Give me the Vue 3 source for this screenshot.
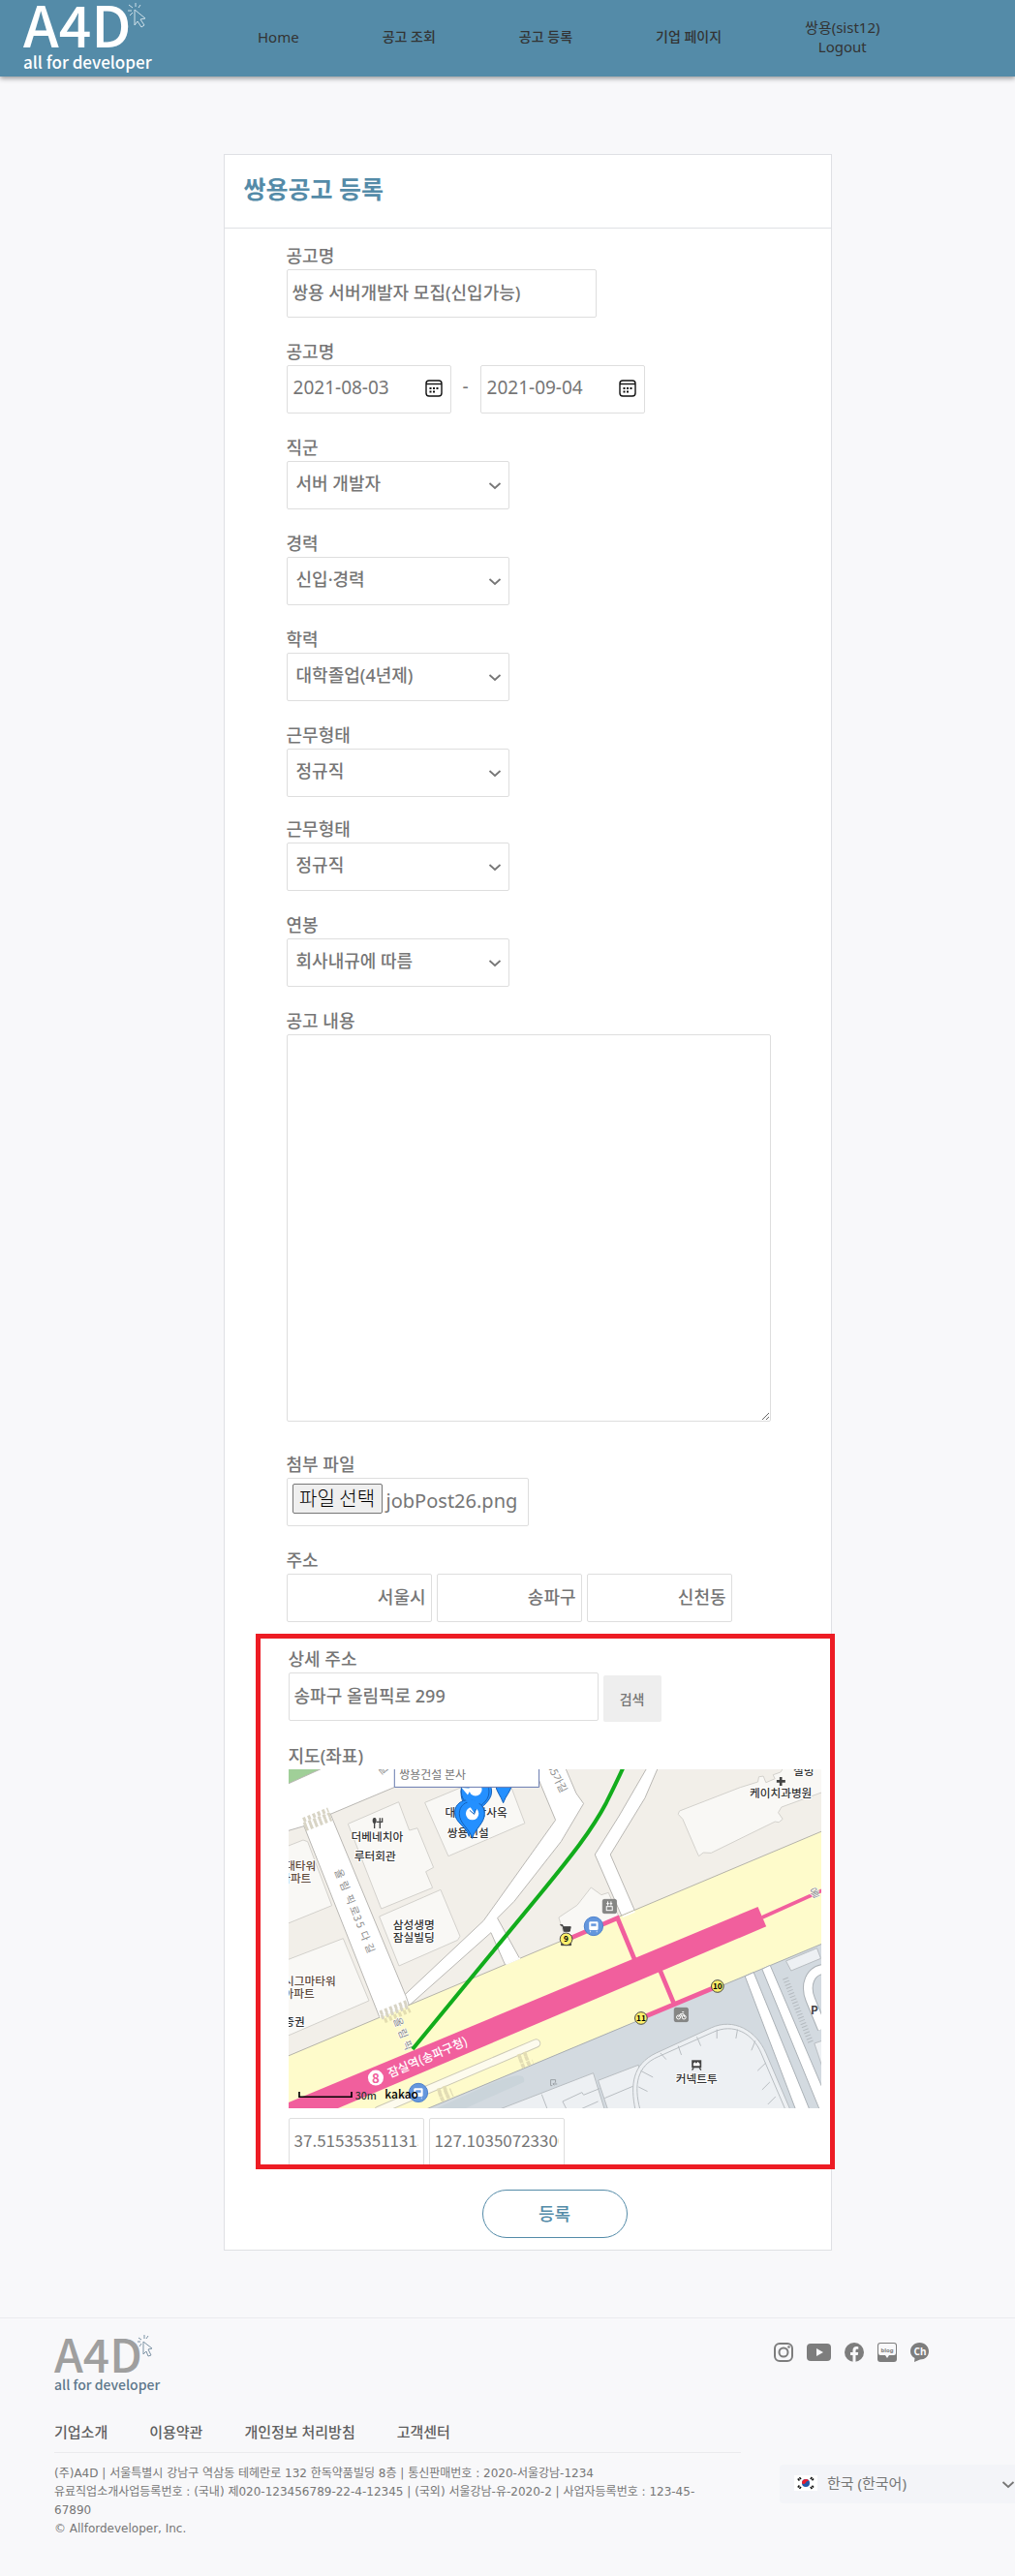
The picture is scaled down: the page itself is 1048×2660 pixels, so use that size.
<script setup>
import { ref } from 'vue'

const links = ['공고 조회', '공고 등록', '기업 페이지']
const title = ref('쌍용 서버개발자 모집(신입가능)')
const from = ref('2021-08-03')
const to = ref('2021-09-04')
const selects = [
  { id: 'job', label: '직군', value: '서버 개발자' },
  { id: 'career', label: '경력', value: '신입·경력' },
  { id: 'school', label: '학력', value: '대학졸업(4년제)' },
  { id: 'type1', label: '근무형태', value: '정규직', tight: true },
  { id: 'type2', label: '근무형태', value: '정규직' },
  { id: 'pay', label: '연봉', value: '회사내규에 따름' },
]
const content = ref('')
const region = ref(['서울시', '송파구', '신천동'])
const detail = ref('송파구 올림픽로 299')
const lat = ref('37.515353511315')
const lng = ref('127.10350723300')
const footLinks = ['기업소개', '이용약관', '개인정보 처리방침', '고객센터']
</script>

<template>
  <div class="page">
    <header class="top">
      <a href="#" class="logo">
        <svg viewBox="0 0 140 78" width="140" height="78" role="img" aria-label="A4D all for developer">
          <text x="0" y="48" class="big">A4D</text>
          <text x="0" y="70" class="small">all for developer</text>
          <g fill="none" stroke="#cfe0e9" stroke-width="1">
            <path d="M115 9l11 9-5 1 4 6-3 2-4-6-3 4z" />
            <path d="M113 7l-4-3M116 6V2M119 7l2-3M112 10h-4M113 12l-3 3" />
          </g>
        </svg>
      </a>
      <nav class="menu">
        <a href="#" class="latin">Home</a>
        <a v-for="l in links" :key="l" href="#">{{ l }}</a>
        <div class="user latin"><a href="#">쌍용(sist12)</a><a href="#">Logout</a></div>
      </nav>
    </header>

    <main class="card">
      <h1>쌍용공고 등록</h1>
      <form @submit.prevent>
        <div class="field">
          <label for="title">공고명</label>
          <input id="title" v-model="title" type="text" class="box w320" />
        </div>
        <div class="field">
          <label for="from">공고명</label>
          <div class="row dates">
            <span class="date">
              <input id="from" v-model="from" type="text" class="box" />
              <button type="button" aria-label="달력">
                <svg viewBox="0 0 18 18" width="18" height="18"><rect x="1" y="1" width="16" height="16" rx="3" fill="none" stroke="#111" stroke-width="1.4" /><path d="M1 4.500h16" stroke="#111" stroke-width="1.400" /><path d="M8 9h2M11.500 9h2M4.500 9h2M4.500 12.500h2M8 12.500h2" stroke="#111" stroke-width="2" /></svg>
              </button>
            </span>
            <span class="dash">-</span>
            <span class="date">
              <input v-model="to" type="text" class="box" aria-label="종료일" />
              <button type="button" aria-label="달력">
                <svg viewBox="0 0 18 18" width="18" height="18"><rect x="1" y="1" width="16" height="16" rx="3" fill="none" stroke="#111" stroke-width="1.4" /><path d="M1 4.500h16" stroke="#111" stroke-width="1.400" /><path d="M8 9h2M11.500 9h2M4.500 9h2M4.500 12.500h2M8 12.500h2" stroke="#111" stroke-width="2" /></svg>
              </button>
            </span>
          </div>
        </div>
        <div v-for="s in selects" :key="s.id" class="field" :class="{ tight: s.tight }">
          <label :for="s.id">{{ s.label }}</label>
          <span class="pick">
            <select :id="s.id" class="box"><option>{{ s.value }}</option></select>
            <svg viewBox="0 0 14 9" width="14" height="9"><path d="M1.500 2l5.500 5 5.500-5" fill="none" stroke="#767676" stroke-width="1.800" /></svg>
          </span>
        </div>
        <div class="field content">
          <label for="content">공고 내용</label>
          <textarea id="content" v-model="content" class="box"></textarea>
        </div>
        <div class="field">
          <label for="file">첨부 파일</label>
          <div class="box file">
            <input id="file" type="file" class="hidden" />
            <label for="file" class="filebtn">파일 선택</label>
            <span>jobPost26.png</span>
          </div>
        </div>
        <div class="field last">
          <label for="r0">주소</label>
          <div class="row">
            <input v-for="(r, i) in region" :id="'r' + i" :key="i" v-model="region[i]" type="text" class="box w150" :aria-label="i ? '주소 ' + (i + 1) : null" />
          </div>
        </div>

        <section class="marked">
          <div class="field">
            <label for="detail">상세 주소</label>
            <div class="row">
              <input id="detail" v-model="detail" type="text" class="box w320" />
              <button type="button" class="search">검색</button>
            </div>
          </div>
          <label for="lat">지도(좌표)</label>
          <svg class="map" viewBox="21 21 1653 1050" role="img" aria-label="지도">
            <rect x="21" y="21" width="1653" height="1050" fill="#f2efe9" />
            <path d="M21 21H127L21 66z" fill="#a0cf98" />
            <g fill="#f9f8f5" stroke="#d3d1cc" stroke-width="3">
              <path d="M205 190L362 122L395 210L420 203L470 325L446 338L467 388L308 453Z" />
              <path d="M302 477L492 394L552 538L545 550L363 630Z" />
              <path d="M443 124L690 21L753 188L516 290Z" />
              <path d="M15 260L66 240L80 245L155 443L15 500Z" />
              <path d="M15 612L190 545L270 738L15 848Z" />
              <path d="M1228 160L1232 150L1420 77L1475 60L1478 44L1492 42L1500 62L1528 50L1522 38L1545 30L1555 15H1680V90L1548 138L1538 155L1552 175L1540 185L1528 183L1330 280L1306 279L1292 290L1282 268L1242 175Z" />
              <path d="M858 480L915 442L958 387L990 410L1012 403L1045 480L880 550Z" />
            </g>
            <g fill="#fff" stroke="#b9b7b3" stroke-width="3">
              <path d="M10 70L127 17H490L150 160L68 197L10 214Z" />
              <path d="M780 15H878L912 95L935 127L865 245L720 430L668 482L737 607L692 627L648 527L395 752L375 725L625 490L848 178Z" />
              <path d="M1132 15H1166L1125 110L1018 285L1095 462L1055 480L970 285L1045 165Z" />
              <path d="M68 195L150 158L385 725L395 755L303 790Z" />
            </g>
            <path d="M70 191L148 158L155 175L77 210Z" fill="#fff" />
            <path d="M15 911L1680 210V1080H15Z" fill="#fefbcb" stroke="#b5b3aa" stroke-width="3" />
            <path d="M303 789L390 752M694 625L738 606M1056 478L1094 461" stroke="#fff" stroke-width="5" />
            <path d="M445 1075L1680 559V1080Z" fill="#d3dae0" stroke="#a9adb0" stroke-width="3" />
            <path d="M480 1071L660 990Q760 950 750 990L570 1071Z" fill="#cad4da" />
            <g fill="#edf0f3" stroke="#b8bdc1" stroke-width="3">
              <path d="M660 1080L965 962L1000 1075Z" />
              <path d="M980 985L1105 937L1120 1075H1010Z" />
              <path d="M1095 1075C1080 1000 1085 935 1160 900L1330 822C1400 790 1470 830 1500 900L1575 1075Z" />
              <path d="M1562 615L1658 575L1670 607L1578 645Z" />
              <path d="M1650 870L1680 860V960Z" />
            </g>
            <g fill="none" stroke="#b8bdc1" stroke-width="3">
              <path d="M1110 1075C1090 1000 1100 940 1165 912L1335 836C1400 805 1460 840 1485 900L1560 1075" />
              <path d="M805 1028L848 1140M870 1050L930 1022L935 1030L985 1010M870 1050L885 1080M890 1090L980 1050M1000 1040L1088 1003" />
              <path d="M1173 900l18 20M1228 878l10 28M1286 850l12 28M1348 827v28M1412 827l-5 28M1467 862l-12 30M1500 930l-26 25M1512 990l-24 24M1530 1035l-24 24M1112 955l38 20M1105 1005l28 14" />
            </g>
            <g fill="#fff" stroke="#abb1b6" stroke-width="3">
              <path d="M1435 662L1462 650L1635 1075H1592Z" />
              <path d="M1488 640L1513 628L1680 1020V1080H1668Z" />
            </g>
            <path d="M1680 640C1635 645 1620 690 1638 735L1675 825" fill="none" stroke="#abb1b6" stroke-width="32" />
            <path d="M1680 640C1635 645 1620 690 1638 735L1675 825" fill="none" stroke="#fff" stroke-width="26" />
            <path d="M1560 668L1640 870" stroke="#b4babf" stroke-width="18" stroke-dasharray="3 7" />
            <path d="M300 1078L788 870" stroke="#ccc9b5" stroke-width="28" stroke-linecap="round" />
            <path d="M300 1078L788 870" stroke="#fdfbee" stroke-width="22" stroke-linecap="round" />
            <g fill="none" stroke="#d8d4c5" stroke-width="14">
              <path d="M66 178L144 146M68 193L150 160M73 206L154 174" stroke-dasharray="9 7" />
              <path d="M304 776L388 742M308 790L394 754" stroke-dasharray="9 7" />
              <path d="M318 801L398 767" stroke="#e3ddb0" stroke-dasharray="9 7" />
              <path d="M731 912L762 900M736 926L770 912M742 942L778 926M482 1018L515 1005M486 1031L525 1015M492 1045L530 1028" stroke="#e2dcb4" stroke-dasharray="11 8" />
            </g>
            <g class="road">
              <text transform="translate(163 335) rotate(68)" x="0 41 86 123 154 177 208 249" y="0">올림픽로35다길</text>
              <text transform="translate(345 795) rotate(68)" x="0 38 77 117" y="0">올림픽로</text>
              <text transform="translate(822 12) rotate(63)">35가길</text>
              <text transform="translate(297 16) rotate(50)">길</text>
            </g>
            <path d="M405 888L800 408C900 286 960 210 1005 125Q1035 65 1058 15" fill="none" stroke="#12ac1c" stroke-width="12" />
            <path d="M15 1056L1475 447L1501 508L165 1075H15Z" fill="#f15f9d" />
            <path d="M1488 480L1680 394" stroke="#f15f9d" stroke-width="11" />
            <path d="M885 548L1040 482L1093 610M1172 644L1217 752M1113 792L1350 693" fill="none" stroke="#f15f9d" stroke-width="14" />
            <g class="road"><text transform="translate(1642 420) rotate(-22)" fill="#94904f">올</text></g>
            <circle cx="291" cy="977" r="24" fill="#fff" />
            <text x="291" y="992" text-anchor="middle" class="num" fill="#f15f9d">8</text>
            <text transform="translate(335 977) rotate(-23)" class="station">잠실역(송파구청)</text>
            <g class="poi" text-anchor="middle">
              <text x="295" y="242">더베네치아</text>
              <text x="289" y="302">루터회관</text>
              <text x="409" y="517">삼성생명</text>
              <text x="409" y="556">잠실빌딩</text>
              <text x="602" y="168">대한제당사옥</text>
              <text x="577" y="232">쌍용건설</text>
              <text x="1546" y="109">케이치과병원</text>
              <text x="1617" y="38">설빙</text>
              <text x="1285" y="992">커넥트투</text>
              <g text-anchor="end">
                <text x="106" y="332" class="apt">대타워</text>
                <text x="91" y="373" class="apt">아파트</text>
                <text x="167" y="689" class="apt">시그마타워</text>
                <text x="101" y="730" class="apt">아파트</text>
                <text x="71" y="815">증권</text>
              </g>
            </g>
            <text x="1650" y="780" text-anchor="middle" class="park">P</text>
            <g stroke="#444" fill="none" stroke-width="5">
              <path d="M287 172V204M304 172V184H293M304 184H311V172M304 172V204" stroke-width="4" />
              <ellipse cx="287" cy="180" rx="6" ry="9" fill="#444" stroke="none" />
              <path d="M1546 45V72M1533 58H1560" stroke-width="8" />
            </g>
            <g fill="#444"><path d="M1270 922h30v24h-30z" /><path d="M1276 946l-5 7M1294 946l5 7" stroke="#444" stroke-width="4" /><path d="M1275 940v-8l5-4 4 4 5-5 6 6v7z" fill="#fff" /></g>
            <path d="M833 983h15v9M833 983v18h5M853 996h-13l4-4M840 996l4 4" fill="none" stroke="#9aa0a4" stroke-width="3" />
            <g stroke="#1560b8" stroke-width="3" fill="#2490ff">
              <path d="M662 70h50c-3 20-18 32-26 55c-8-23-21-35-24-55z" />
              <path d="M650 90c0 35-45 50-60 90c-12-38-35-50-35-90c0-60 95-60 95 0z" />
              <path d="M642 90c0 35-33 40-46 72c-12-32-40-40-40-72c0-60 86-60 86 0z" />
              <path d="M620 155c0 32-32 42-40 74c-8-32-44-42-44-74c0-52 84-52 84 0z" />
              <path d="M628 158c0 32-30 46-38 77c-8-31-40-45-40-77c0-50 78-50 78 0z" />
            </g>
            <circle cx="600" cy="83" r="20" fill="#fff" /><path d="M557 78l30 2-11 20z" fill="#fff" />
            <circle cx="590" cy="158" r="20" fill="#fff" />
            <path d="M565 108l32 50 16-36z" fill="#2490ff" /><path d="M582 148l14 12 5-16" fill="none" stroke="#1560b8" stroke-width="3" />
            <path d="M349 10V76H797V10Z" fill="#fff" stroke="#6678ae" stroke-width="3" />
            <text x="364" y="52" class="tip">쌍용건설 본사</text>
            <g stroke="#777" stroke-width="2">
              <rect x="994" y="424" width="43" height="43" rx="5" fill="#858684" />
              <rect x="1216" y="760" width="43" height="43" rx="5" fill="#858684" />
            </g>
            <g fill="none" stroke="#fff" stroke-width="3">
              <rect x="1006" y="446" width="18" height="12" /><path d="M1010 443v-13M1006 437h8M1020 443v-13M1016 437h8" />
              <circle cx="1229" cy="789" r="6" /><circle cx="1246" cy="789" r="6" /><path d="M1229 789l6-10h10l3 10M1235 779l5 9M1240 773h6" />
            </g>
            <g><circle cx="966" cy="507" r="29" fill="#6497dd" stroke="#4d82cc" stroke-width="3" /><rect x="952" y="493" width="28" height="26" rx="4" fill="#fff" /><path d="M957 498h18v10h-18zM956 521v5M976 521v5" fill="#6497dd" stroke="#fff" stroke-width="2" /></g>
            <g><circle cx="423" cy="1023" r="29" fill="#6497dd" stroke="#4d82cc" stroke-width="3" /><rect x="409" y="1009" width="28" height="26" rx="4" fill="#fff" /><path d="M414 1014h18v10h-18zM413 1037v5M433 1037v5" fill="#6497dd" stroke="#fff" stroke-width="2" /></g>
            <path d="M862 503h8l4 20h18l3-14h-24M866 560h30v6h-30z" fill="#444" stroke="#444" stroke-width="3" />
            <g fill="#fdf06b" stroke="#444" stroke-width="3"><circle cx="881" cy="547" r="19" /><circle cx="1350" cy="693" r="19" /><circle cx="1113" cy="792" r="19" /></g>
            <g class="exit" text-anchor="middle"><text x="881" y="556">9</text><text x="1350" y="702">10</text><text x="1113" y="801">11</text></g>
            <path d="M54 1020V1036H216V1020" fill="none" stroke="#000" stroke-width="5" />
            <text x="227" y="1043" class="scale">30m</text>
            <text x="319" y="1041" class="kakao">kakao</text>
          </svg>
          <div class="row coords">
            <input id="lat" v-model="lat" type="text" class="box w140" />
            <input v-model="lng" type="text" class="box w140" aria-label="경도" />
          </div>
        </section>
        <button type="submit" class="submit">등록</button>
      </form>
    </main>

    <footer class="foot">
      <div class="info">
        <a href="#" class="flogo">
          <svg viewBox="0 0 112 60" width="112" height="60" role="img" aria-label="A4D all for developer">
            <text x="0" y="40" class="fbig">A4D</text>
            <text x="0" y="58" class="fsmall">all for developer</text>
            <path d="M92 8l9 7-4 1 3 6-3 1-2-5-3 3zM90 6l-3-2M93 5V1M95 5l2-3M89 8h-3M90 10l-2 3" fill="none" stroke="#7d93a5" stroke-width="1" />
          </svg>
        </a>
        <nav class="fnav"><a v-for="f in footLinks" :key="f" href="#">{{ f }}</a></nav>
        <p>
          (주)A4D | 서울특별시 강남구 역삼동 테헤란로 132 한독약품빌딩 8층 | 통신판매번호 : 2020-서울강남-1234<br />
          유료직업소개사업등록번호 : (국내) 제020-123456789-22-4-12345 | (국외) 서울강남-유-2020-2 | 사업자등록번호 : 123-45-<br />67890<br />
          © Allfordeveloper, Inc.
        </p>
      </div>
      <div class="side">
        <div class="social">
          <a href="#" aria-label="Instagram"><svg width="20" height="20" viewBox="0 0 20 20"><rect x="1" y="1" width="18" height="18" rx="5" fill="none" stroke="#7d7d7d" stroke-width="2" /><circle cx="10" cy="10" r="4.500" fill="none" stroke="#7d7d7d" stroke-width="2" /><circle cx="15.500" cy="4.500" r="1.300" fill="#7d7d7d" /></svg></a>
          <a href="#" aria-label="YouTube"><svg width="25" height="20" viewBox="0 0 25 20"><rect y="1" width="25" height="18" rx="4" fill="#7d7d7d" /><path d="M10 6v8l7-4z" fill="#f8f8fa" /></svg></a>
          <a href="#" aria-label="Facebook"><svg width="20" height="20" viewBox="0 0 20 20"><circle cx="10" cy="10" r="10" fill="#7d7d7d" /><path d="M8.500 20v-7H6v-3h2.500V8c0-2.700 1.500-4 3.800-4l2 .2v2.500h-1.200c-1.200 0-1.600.7-1.600 1.500V10h2.700l-.5 3h-2.200v7z" fill="#f8f8fa" /></svg></a>
          <a href="#" aria-label="Blog"><svg width="20" height="20" viewBox="0 0 20 20"><rect width="20" height="20" rx="3" fill="#7d7d7d" /><path d="M1 3q0-2 2-2h14q2 0 2 2v8q0 2-2 2h-5l-2 3-2-3H3q-2 0-2-2z" fill="#f8f8fa" /><text x="10" y="10" text-anchor="middle" class="blog">blog</text></svg></a>
          <a href="#" aria-label="Channel"><svg width="20" height="20" viewBox="0 0 20 20"><path d="M9.500 0C15 0 19 4 19 9s-4 8.500-9 8.500L4 20l.5-4C1.500 14.500 0 12 0 9c0-5 4-9 9.500-9z" fill="#7d7d7d" /><text x="10" y="13" text-anchor="middle" class="ch">Ch</text></svg></a>
        </div>
        <div class="lang">
          <svg class="flag" viewBox="0 0 24 16" width="24" height="16"><rect width="24" height="16" fill="#fff" /><circle cx="12" cy="8" r="4" fill="#2457a8" /><path d="M8 8a4 4 0 0 1 7.500-1.800c-1.500-1-2.800 0-3.500 1.300S9 10 8 8z" fill="#ec1c2d" /><path d="M4 5l3-2.500M17 2.500l3 2.500M4 11l3 2.500M17 13.500l3-2.500" stroke="#111" stroke-width="2.500" stroke-dasharray="1.600 .5" /></svg>
          <select aria-label="언어"><option>한국 (한국어)</option></select>
          <svg class="arrow" viewBox="0 0 14 9" width="14" height="9"><path d="M1.500 2l5.500 5 5.500-5" fill="none" stroke="#767676" stroke-width="1.800" /></svg>
        </div>
      </div>
    </footer>
  </div>
</template>

<style>
body { background: #f8f8fa; overflow-x: hidden; }
</style>

<style scoped>
* { box-sizing: border-box; }
.page { font-family: "Noto Sans", "Noto Sans CJK KR", sans-serif; color: #767676; overflow: hidden; background: #f8f8fa; }
a { color: inherit; text-decoration: none; }
.top { display: flex; align-items: center; height: 79px; background: #548ba8; box-shadow: 0 2px 5px rgba(0, 0, 0, .4); }
.logo { margin-left: 24px; line-height: 0; }
.logo svg { overflow: visible; }
.big { font: 500 59px "Noto Sans CJK KR", sans-serif; fill: #fff; }
.small { font: 500 17px "Noto Sans CJK KR", sans-serif; fill: #fff; }
.menu { display: flex; align-items: center; gap: 86px; margin-left: 102px; color: #333; font-size: 14px; font-weight: 500; line-height: 20px; padding-bottom: 3px; white-space: nowrap; }
.latin { font-size: 15px; font-weight: 400; }
.user { display: flex; flex-direction: column; align-items: center; }

.card { margin: 80px 18% 0 22%; background: #fff; border: 1px solid #dfe0e4; }
h1 { margin: 0; height: 76px; padding-left: 20px; line-height: 70px; font-size: 25px; font-weight: 700; color: #548ba8; border-bottom: 1px solid #dfe0e4; }
form { padding: 15px 0 12px 64px; }
label { display: block; height: 27px; line-height: 26px; font-size: 18px; font-weight: 500; }
.field { margin-bottom: 22px; }
.field.tight { margin-bottom: 20px; }
.box { display: block; height: 50px; margin: 0; padding: 0 5px; padding-bottom: 5px; border: 1px solid #dedede; border-radius: 2px; background: #fff; color: #767676; font-family: inherit; font-size: 18px; font-weight: 500; outline: 0; }
.row { display: flex; gap: 5px; }
.w320 { width: 320px; }
.w150 { width: 150px; text-align: right; }
.w140 { width: 140px; font-family: "Noto Sans CJK KR", sans-serif; font-size: 17px; font-weight: 400; }
.dates { gap: 0; align-items: center; }
.date { position: relative; width: 170px; }
.date .box { width: 100%; font-size: 19px; font-weight: 400; padding-left: 6px; }
.date button { position: absolute; right: 9px; top: 15px; padding: 0; border: 0; background: none; line-height: 0; }
.dash { width: 30px; text-align: center; font-size: 19px; line-height: 24px; padding-bottom: 6px; }
.pick { display: block; position: relative; width: 230px; }
.pick select { width: 100%; appearance: none; padding: 0 30px 5px 9px; }
.pick svg { position: absolute; right: 8px; top: 21px; pointer-events: none; }
.content { margin-bottom: 31px; }
textarea.box { width: 500px; height: 400px; resize: both; }
.file { display: flex; align-items: flex-start; width: 250px; padding: 5px; font-size: 20px; font-weight: 400; line-height: 36px; }
.hidden { position: absolute; width: 1px; height: 1px; opacity: 0; }
.filebtn { flex: none; width: 93px; height: 31px; margin-right: 4px; border: 1px solid #767676; border-radius: 2px; background: #efefef; color: #000; text-align: center; font-family: "Noto Sans CJK KR", sans-serif; font-size: 20px; font-weight: 300; line-height: 27px; }
.last { margin-bottom: 12px; }
.marked { margin: 0 -4px 21px -32px; padding: 8px 9px 0 29px; border: 5px solid #ed1c24; height: 553px; overflow: hidden; }
.search { width: 60px; height: 48px; margin-top: 3px; border: 0; border-radius: 2px; background: #eee; color: #767676; font: 500 14px "Noto Sans CJK KR", sans-serif; }
.map { display: block; width: 100%; height: 350px; margin-bottom: 10px; }
.map text { font-family: "Noto Sans CJK KR", sans-serif; }
.poi text { font-size: 35px; font-weight: 500; fill: #333; stroke: #fff; stroke-width: 6px; paint-order: stroke; stroke-linejoin: round; }
.poi .apt { fill: #5f4b3c; }
.road text { font-size: 32px; fill: #8c8c8c; stroke: #fff; stroke-width: 3px; paint-order: stroke; }
.station { font-size: 37px; font-weight: 500; fill: #fff; }
.num { font-size: 40px; font-weight: 700; }
.park { font-size: 35px; font-weight: 700; fill: #444; }
.exit { font-size: 25px; font-weight: 700; }
.tip { font-size: 36px; fill: #767676; }
.scale { font-size: 32px; font-weight: 500; fill: #333; }
.kakao { font-size: 36px; font-weight: 500; }
.submit { display: block; width: 150px; height: 50px; margin-left: 202px; padding: 0 0 3px; border: 1px solid #548ba8; border-radius: 25px; background: #fff; color: #548ba8; font: 500 18px "Noto Sans CJK KR", sans-serif; }

.foot { display: flex; justify-content: space-between; margin-top: 69px; padding-left: 56px; border-top: 1px solid #ebebee; min-height: 250px; }
.info { width: 709px; padding-top: 16px; }
.flogo { display: block; height: 60px; }
.flogo svg { overflow: visible; }
.fbig { font: 500 48px "Noto Sans CJK KR", sans-serif; fill: #9f9f9f; }
.fsmall { font: 500 14px "Noto Sans CJK KR", sans-serif; fill: #5f788c; }
.fnav { display: flex; gap: 43px; height: 63px; padding-top: 30px; border-bottom: 1px solid #ebebee; font-size: 15px; line-height: 22px; font-weight: 500; color: #5f5f5f; }
p { margin: 12px 0 0; font-family: "DejaVu Sans", "Noto Sans CJK KR", sans-serif; font-size: 12px; line-height: 19px; white-space: nowrap; }
.side { width: 249px; padding-top: 25px; }
.social { display: flex; gap: 14px; height: 126px; line-height: 0; }
.lang { position: relative; width: 255px; height: 40px; margin-left: 6px; }
.lang select { width: 100%; height: 100%; appearance: none; border: 0; border-radius: 4px; background: #f3f4f8; padding: 0 0 3px 49px; color: #767676; font-family: inherit; font-size: 15px; }
.flag { position: absolute; left: 15px; top: 11px; }
.arrow { position: absolute; right: 12px; top: 16px; }
.blog { font: 700 6px "Noto Sans", sans-serif; fill: #7d7d7d; }
.ch { font: 700 10px "Noto Sans", sans-serif; fill: #f8f8fa; }
</style>
